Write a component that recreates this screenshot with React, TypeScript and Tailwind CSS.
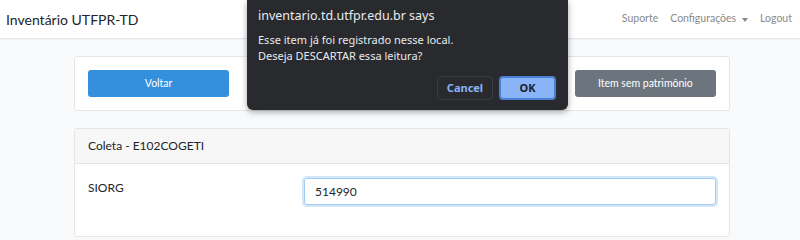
import React from "react";

const font = { fontFamily: "Lato, 'Open Sans', sans-serif" };

const Navbar: React.FC = () => (
  <nav className="flex h-[39px] items-center justify-between border-b border-[#e6e6e6] bg-white pl-[6px] pr-[8px] shadow-[0_1px_2px_rgba(0,0,0,0.04)]">
    <span className="text-[14px] text-[#212529]">Inventário UTFPR-TD</span>
    <div className="flex items-center gap-[12px] text-[10.5px] text-[#8a8a8a]">
      <span>Suporte</span>
      <span className="flex items-center gap-[6px]">
        Configurações
        <span className="mt-[1px] h-0 w-0 border-x-[3.5px] border-t-[4px] border-x-transparent border-t-[#8a8a8a]" />
      </span>
      <span>Logout</span>
    </div>
  </nav>
);

const AlertDialog: React.FC = () => (
  <div
    className="absolute left-[247px] top-0 h-[110px] w-[321px] rounded-b-[6px] bg-[#292a2d] px-[11px] shadow-[0_2px_6px_rgba(0,0,0,0.35)]"
    style={{ fontFamily: "'Noto Sans', 'DejaVu Sans', sans-serif" }}
  >
    <div className="pt-[7px] text-[12.5px] text-[#e8eaed]">inventario.td.utfpr.edu.br says</div>
    <div className="mt-[6px] text-[11px] leading-[16px] text-[#e8eaed]">
      <div>Esse item já foi registrado nesse local.</div>
      <div>Deseja DESCARTAR essa leitura?</div>
    </div>
    <div className="mt-[12px] flex justify-end gap-[6px] pr-[1px]">
      <button className="h-[24px] w-[56px] rounded-[4px] border border-[#3c3d40] text-[11px] font-bold text-[#8ab4f8]">
        Cancel
      </button>
      <button className="h-[24px] w-[57px] rounded-[4px] border-2 border-[#4a7fd8] bg-[#8ab4f8] text-[11px] font-bold text-[#202124]">
        OK
      </button>
    </div>
  </div>
);

export default function App() {
  return (
    <div className="relative h-[240px] w-[800px] overflow-hidden bg-[#f8fafc]" style={font}>
      <Navbar />
      <div className="ml-[74px] mt-[17px] flex w-[656px] flex-col gap-[17px]">
        <div className="rounded-[3px] border border-[#e6e6e6] bg-white p-[13px]">
          <div className="grid grid-cols-4 gap-[21px]">
            <button className="h-[27px] rounded-[3px] bg-[#3490dc] text-[10.5px] text-white">Voltar</button>
            <button className="h-[27px] rounded-[3px] bg-[#38c172]" />
            <button className="h-[27px] rounded-[3px] bg-[#e3342f]" />
            <button className="h-[27px] rounded-[3px] bg-[#6c757d] text-[10.5px] text-white">Item sem patrimônio</button>
          </div>
        </div>
        <div className="rounded-[3px] border border-[#e6e6e6] bg-white">
          <div className="flex h-[35px] items-center border-b border-[#e3e3e3] bg-[#f7f7f7] px-[13px] text-[12px] text-[#212529]">
            Coleta - E102COGETI
          </div>
          <div className="grid grid-cols-[216px_1fr] px-[13px] pb-[31px] pt-[14px] text-[12px] text-[#212529]">
            <span className="pt-[1px]">SIORG</span>
            <div className="flex h-[27px] items-center rounded-[3px] border border-[#a1cbef] px-[10px] shadow-[0_0_0_2px_rgba(52,144,220,0.22)]">
              514990
            </div>
          </div>
        </div>
      </div>
      <AlertDialog />
    </div>
  );
}
